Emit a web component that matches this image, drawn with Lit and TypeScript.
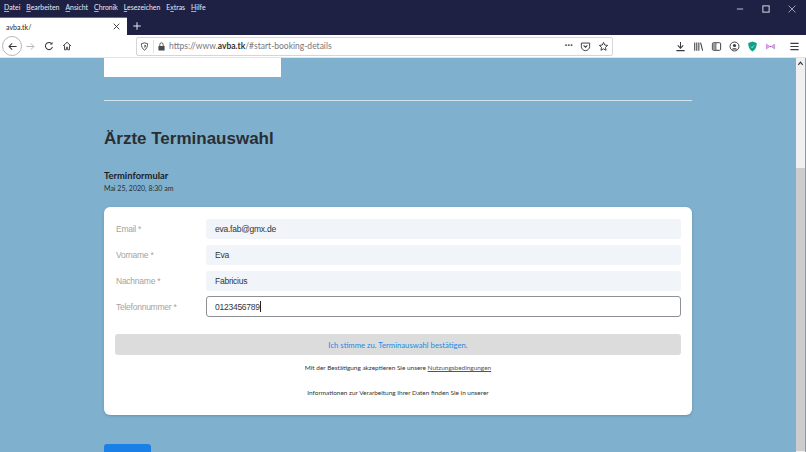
import { LitElement, html, css, svg } from "lit";
import { customElement } from "lit/decorators.js";

const ic = (w: number, body: unknown, vb = "0 0 16 16") =>
  html`<svg class="ic" width=${w} height=${w} viewBox=${vb} fill="none" stroke="#3b3b40" stroke-width="1.4">${body}</svg>`;

@customElement("app-root")
export class AppRoot extends LitElement {
  static styles = css`
    :host { display: block; width: 806px; height: 452px; overflow: hidden; font-family: "Lato", "Noto Sans", sans-serif; position: relative; background: #7fb1ce; }
    .menubar { height: 17px; background: #1f2144; display: flex; align-items: center; justify-content: space-between; color: #e8e8f0; font-size: 6.9px; padding-left: 4px; }
    .menus { display: flex; gap: 6px; padding-bottom: 4px; }
    .menus u { text-decoration-thickness: 0.5px; text-underline-offset: 1px; text-decoration-color: #a9a9bd; }
    .winbtns { display: flex; align-items: center; height: 17px; padding-right: 1px; }
    .winbtns span { width: 26px; display: flex; justify-content: center; }
    .tabbar { height: 18px; background: #1f2144; display: flex; align-items: stretch; }
    .tab { width: 127px; background: #fff; border-top: 1px solid #0a84ff; box-sizing: border-box; display: flex; align-items: center; justify-content: space-between; padding: 0 6px; font-size: 7px; color: #222; }
    .plus { width: 20px; display: flex; align-items: center; justify-content: center; }
    .toolbar { height: 23px; background: #fff; display: flex; align-items: center; padding-left: 2px; box-sizing: border-box; border-bottom: 1px solid #e3e3e6; }
    .back { width: 20px; height: 20px; border: 1px solid #b9b9bd; border-radius: 50%; box-sizing: border-box; display: flex; align-items: center; justify-content: center; flex: none; }
    .navs { display: flex; align-items: center; gap: 8px; margin-left: 3px; width: 111px; }
    .url { width: 477px; height: 19px; box-sizing: border-box; border: 1px solid #d6d6da; border-radius: 2px; display: flex; align-items: center; padding: 0 3px 0 3px; font-size: 8.5px; color: #77777c; flex: none; }
    .url b { color: #333; font-weight: 700; }
    .urltext { flex: 1; margin-left: 3px; white-space: nowrap; }
    .sep { width: 1px; height: 13px; background: #e3e3e6; margin: 0 3.5px; }
    .urlr { display: flex; align-items: center; gap: 7px; }
    .dots { font-size: 9px; font-weight: 700; color: #444; letter-spacing: 0.3px; line-height: 1; margin-top: -3px; }
    .tools { display: flex; align-items: center; margin-left: 62px; gap: 7px; }
    .tools .last { margin-left: 6px; }
    .main { height: 394px; display: flex; }
    .page { width: 796px; flex: none; padding-left: 104px; box-sizing: border-box; overflow: hidden; }
    .col { width: 588px; display: flex; flex-direction: column; }
    .stub { width: 177px; height: 19px; background: #fff; }
    .rule { height: 1px; background: #d4e4ee; margin-top: 23px; }
    h1 { margin: 27px 0 0; font: 700 17px/22px "Liberation Sans", sans-serif; color: #2a2e33; }
    h2 { margin: 19px 0 0; font: 700 9.4px/13px "Lato", sans-serif; color: #1c2024; }
    .date { font-size: 7px; line-height: 11px; color: #2a2e33; margin-top: 1px; }
    .card { margin-top: 13px; height: 208px; box-sizing: border-box; background: #fff; border-radius: 6px; padding: 12px 11px; box-shadow: 0 1px 3px rgba(60,90,110,.35); }
    .row { display: flex; align-items: center; height: 20px; margin-bottom: 6px; }
    .row label { width: 90px; margin-left: 1px; flex: none; font: 8.5px "Liberation Sans", sans-serif; letter-spacing: -0.25px; color: #a3a3a3; white-space: nowrap; }
    .val { flex: 1; height: 20px; background: #f1f4f8; border-radius: 3px; padding-left: 9px; display: flex; align-items: center; font: 8.5px "Liberation Sans", sans-serif; letter-spacing: -0.25px; color: #32373c; }
    .row.focus { height: 21px; margin-top: -1px; }
    .row.focus .val { height: 21px; background: #fff; border: 1px solid #8d9196; box-sizing: border-box; padding-left: 8px; }
    .caret { display: inline-block; width: 1px; height: 11px; background: #222; }
    .agree { height: 21px; margin-top: 17px; background: #dcdcdc; border-radius: 3px; display: flex; align-items: center; justify-content: center; font-size: 7.7px; color: #1e88e5; }
    .note { text-align: center; font-size: 6.45px; line-height: 10px; color: #333; }
    .n1 { margin-top: 8px; }
    .n2 { margin-top: 15px; }
    .note a { color: #555; text-decoration: underline; }
    .blue { width: 47px; height: 20px; margin-top: 29px; background: #1a7fe6; border-radius: 3px; flex: none; }
    .scroll { width: 10px; flex: none; background: #f0f0f0; border-right: 1px solid #8f9aa2; box-sizing: border-box; display: flex; flex-direction: column; align-items: center; }
    .up { height: 11px; display: flex; align-items: center; justify-content: center; }
    .thumb { width: 100%; height: 283px; margin-top: 99px; background: #cdcdcd; }
    .ic { display: block; flex: none; }
  `;

  render() {
    const menus: [string, string][] = [["D", "atei"], ["B", "earbeiten"], ["A", "nsicht"], ["C", "hronik"], ["L", "esezeichen"]];
    return html`
      <div class="menubar">
        <div class="menus">
          ${menus.map(([a, b]) => html`<span><u>${a}</u>${b}</span>`)}
          <span>E<u>x</u>tras</span><span><u>H</u>ilfe</span>
        </div>
        <div class="winbtns">
          <span>${ic(10, svg`<path d="M3 8h10" stroke="#c9c9d6" stroke-width="1.5"/>`)}</span>
          <span>${ic(10, svg`<rect x="3" y="3" width="10" height="10" stroke="#d8d8e2" stroke-width="1.6"/>`)}</span>
          <span>${ic(10, svg`<path d="M2.5 2.5l11 11M13.5 2.5l-11 11" stroke="#c9c9d6" stroke-width="1.2"/>`)}</span>
        </div>
      </div>
      <div class="tabbar">
        <div class="tab"><span>avba.tk/</span>${ic(9, svg`<path d="M3 3l10 10M13 3L3 13" stroke="#333" stroke-width="1.6"/>`)}</div>
        <div class="plus">${ic(10, svg`<path d="M8 2v12M2 8h12" stroke="#e8e8f0" stroke-width="1.6"/>`)}</div>
      </div>
      <div class="toolbar">
        <div class="back">${ic(11, svg`<path d="M14 8H3M7.5 3.5L3 8l4.5 4.5" stroke="#333" stroke-width="1.5"/>`)}</div>
        <div class="navs">
          ${ic(11, svg`<path d="M2 8h11M8.5 3.5L13 8l-4.5 4.5" stroke="#b5b5b8" stroke-width="1.4"/>`)}
          ${ic(10, svg`<path d="M13.5 9.5A5.7 5.7 0 1 1 12 4" stroke-width="1.7"/><path d="M13.6 1.5v4.2H9.4z" fill="#3b3b40" stroke="none"/>`)}
          ${ic(10, svg`<path d="M1.5 8L8 2l6.5 6M4 7v7h3v-4h2v4h3V7" stroke-width="1.5"/>`)}
        </div>
        <div class="url">
          ${ic(9, svg`<path d="M8 1.5l5.5 1.5c0 5-1.5 9-5.5 11.5C4 12 2.5 8 2.5 3z" stroke-width="1.5"/><path d="M8 5l2.5.7c0 2-.7 3.5-2.5 4.8z" fill="#3b3b40" stroke="none"/>`)}
          <span class="sep"></span>
          ${ic(9, svg`<rect x="2.5" y="7" width="11" height="8" rx="1" fill="#4a4a4f" stroke="none"/><path d="M5 7V4.500a3 3 0 0 1 6 0V7" stroke="#4a4a4f" stroke-width="1.6"/>`)}
          <span class="urltext">https://www.<b>avba.tk</b>/#start-booking-details</span>
          <div class="urlr">
            <span class="dots">···</span>
            ${ic(11, svg`<path d="M2 3h12v5a6 6 0 0 1-12 0z" stroke-linejoin="round"/><path d="M5.2 6.5L8 9l2.8-2.5" stroke-width="1.5"/>`)}
            ${ic(11, svg`<path d="M8 2l1.8 3.9 4.2.5-3.1 2.9.8 4.2L8 11.4l-3.7 2.1.8-4.2L2 6.4l4.2-.5z" stroke-linejoin="round"/>`)}
          </div>
        </div>
        <div class="tools">
          ${ic(11, svg`<path d="M8 1.5v8.5M4 6.5L8 10.5l4-4M2 14h12" stroke-width="1.5"/>`)}
          ${ic(11, svg`<path d="M2.5 2v12M5.5 2v12M8.5 2v12M11 2.5l3 11.5" stroke-width="1.5"/>`)}
          ${ic(11, svg`<rect x="2" y="2.5" width="12" height="11" rx="1.5"/><path d="M7 2.5v11"/><rect x="2.5" y="3" width="4" height="10" fill="#9a9a9e" stroke="none"/>`)}
          ${ic(11, svg`<circle cx="8" cy="8" r="6.5"/><circle cx="8" cy="6.5" r="2.3" fill="#3b3b40" stroke="none"/><path d="M3.8 12.5c1-2.5 7.4-2.5 8.4 0" fill="#3b3b40" stroke="none"/>`)}
          ${ic(11, svg`<path d="M8 .8l6.2 2.2c0 6-1.7 9.8-6.2 12.2C3.5 12.8 1.8 9 1.8 3z" fill="#12a085" stroke="none"/><path d="M5.5 8l2 2 3-4" stroke="#bfeee3" stroke-width="1"/>`)}
          ${ic(11, svg`<path d="M2 4.5L7 8l-5 3.5zM14 4.5L9 8l5 3.5z" fill="#d9a6ea" stroke="#c27fdc" stroke-width="1"/><circle cx="8" cy="8" r="1" fill="#a64fc8" stroke="none"/>`)}
          <span class="last">${ic(11, svg`<path d="M2 3.5h12M2 8h12M2 12.5h12" stroke-width="1.6"/>`)}</span>
        </div>
      </div>
      <div class="main">
        <div class="page">
          <div class="col">
            <div class="stub"></div>
            <div class="rule"></div>
            <h1>Ärzte Terminauswahl</h1>
            <h2>Terminformular</h2>
            <div class="date">Mai 25, 2020, 8:30 am</div>
            <div class="card">
              <div class="row"><label>Email *</label><div class="val">eva.fab@gmx.de</div></div>
              <div class="row"><label>Vorname *</label><div class="val">Eva</div></div>
              <div class="row"><label>Nachname *</label><div class="val">Fabricius</div></div>
              <div class="row focus"><label>Telefonnummer *</label><div class="val">0123456789<span class="caret"></span></div></div>
              <div class="agree">Ich stimme zu. Terminauswahl bestätigen.</div>
              <div class="note n1">Mit der Bestätigung akzeptieren Sie unsere <a>Nutzungsbedingungen</a></div>
              <div class="note n2">Informationen zur Verarbeitung Ihrer Daten finden Sie in unserer</div>
            </div>
            <div class="blue"></div>
          </div>
        </div>
        <div class="scroll">
          <div class="up">${ic(7, svg`<path d="M3 11l5-6 5 6" stroke="#333" stroke-width="2.5"/>`)}</div>
          <div class="thumb"></div>
        </div>
      </div>
    `;
  }
}
